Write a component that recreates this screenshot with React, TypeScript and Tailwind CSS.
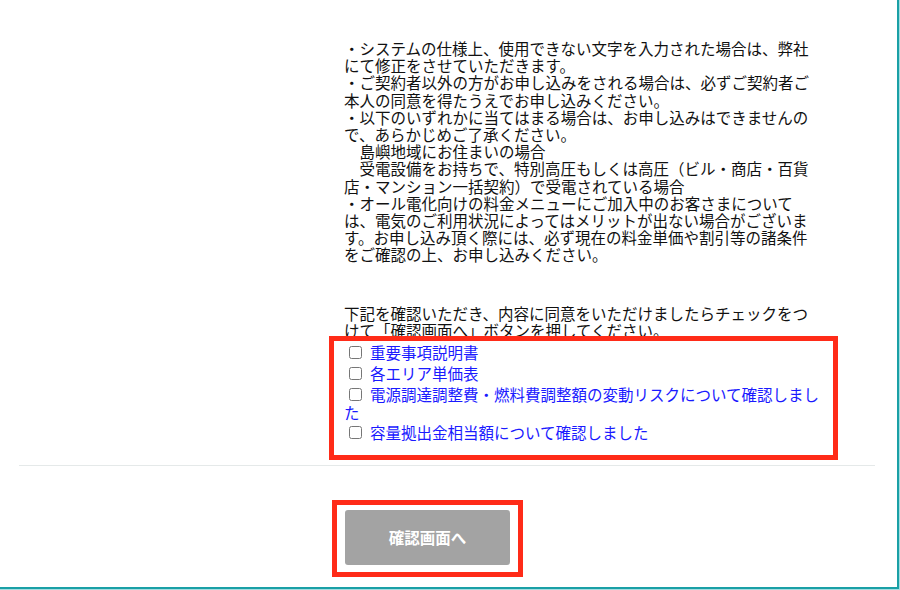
import React from "react";

const font = { fontFamily: '"Noto Sans CJK JP", "Noto Sans", sans-serif' };

const notes = [
  "・システムの仕様上、使用できない文字を入力された場合は、弊社にて修正をさせていただきます。",
  "・ご契約者以外の方がお申し込みをされる場合は、必ずご契約者ご本人の同意を得たうえでお申し込みください。",
  "・以下のいずれかに当てはまる場合は、お申し込みはできませんので、あらかじめご了承ください。",
  "　島嶼地域にお住まいの場合",
  "　受電設備をお持ちで、特別高圧もしくは高圧（ビル・商店・百貨店・マンション一括契約）で受電されている場合",
  "・オール電化向けの料金メニューにご加入中のお客さまについては、電気のご利用状況によってはメリットが出ない場合がございます。お申し込み頂く際には、必ず現在の料金単価や割引等の諸条件をご確認の上、お申し込みください。",
];

const items = [
  "重要事項説明書",
  "各エリア単価表",
  "電源調達調整費・燃料費調整額の変動リスクについて確認しました",
  "容量拠出金相当額について確認しました",
];

export default function App() {
  return (
    <div className="w-[900px] h-[590px] bg-[#a6dde1] overflow-hidden" style={font}>
      <div className="w-[899px] h-[589px] bg-white border-r-2 border-b-2 border-[#1aa0a6] box-border">
        <div className="pl-[19px] pr-[22px]">
          <div className="pl-[325px] pt-[40px] text-[15.5px] leading-[17.2px] text-[#111]">
            <div className="w-[477px]">
              {notes.map((n, i) => (
                <div key={i}>{n}</div>
              ))}
              <div className="mt-[41px]">
                下記を確認いただき、内容に同意をいただけましたらチェックをつけて「確認画面へ」ボタンを押してください。
              </div>
              <div className="relative mt-[2px]">
                {items.map((t, i) => (
                  <div key={i} className="pt-[2px]">
                    <input type="checkbox" className="mt-[3px] mb-[3px] ml-[5px] mr-[8px] w-[13px] h-[13px]" />
                    <a className="text-[#1a1aff] cursor-pointer">{t}</a>
                  </div>
                ))}
                <div className="absolute top-[-5px] left-[-15px] right-[-17px] bottom-[-18px] border-[5px] border-[#ff2b18] pointer-events-none" />
              </div>
            </div>
          </div>
          <div className="mt-[23px] border-t border-[#e5e9e9]" />
          <div className="pl-[326px] pt-[44px]">
            <div className="relative w-[165px] h-[55px]">
              <button className="w-full h-full rounded-[3px] bg-[#a3a3a3] text-white font-bold text-[15.5px]">
                確認画面へ
              </button>
              <div className="absolute top-[-10px] left-[-13px] right-[-13px] bottom-[-12px] border-[5px] border-[#ff2b18] pointer-events-none" />
            </div>
          </div>
        </div>
      </div>
    </div>
  );
}
